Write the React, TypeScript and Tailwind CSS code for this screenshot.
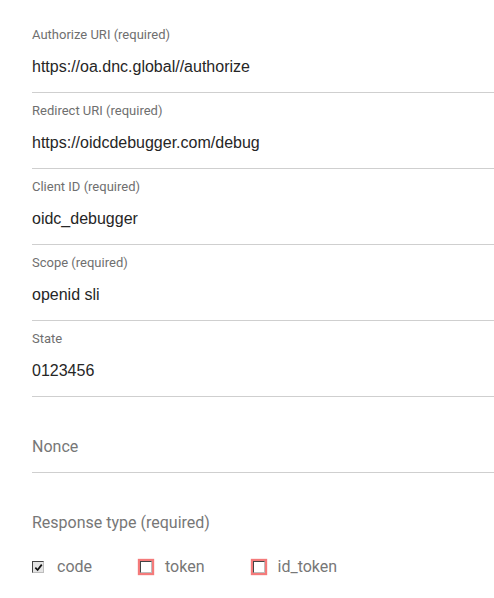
import React from 'react';

const fields = [
  { label: 'Authorize URI (required)', value: 'https://oa.dnc.global//authorize' },
  { label: 'Redirect URI (required)', value: 'https://oidcdebugger.com/debug' },
  { label: 'Client ID (required)', value: 'oidc_debugger' },
  { label: 'Scope (required)', value: 'openid sli' },
  { label: 'State', value: '0123456' },
];

const Check = ({ checked, invalid }: { checked?: boolean; invalid?: boolean }) => (
  <span
    className={
      'relative inline-flex h-3 w-3 items-center justify-center border border-t-[#444] border-l-[#444] border-r-[#bdbdbd] border-b-[#bdbdbd] ' +
      (checked ? 'bg-[#e4e4e4] ' : 'bg-white ') +
      (invalid ? 'shadow-[0_0_1px_2px_#f47a7a]' : '')
    }
  >
    {checked && (
      <svg viewBox="0 0 10 10" className="h-[9px] w-[9px]">
        <path d="M1.5 5.2 L4 7.8 L8.6 1.8" fill="none" stroke="#111" strokeWidth="1.9" />
      </svg>
    )}
  </span>
);

const App = () => {
  return (
    <div className="min-h-[598px] bg-white pl-8 pt-[17px]" style={{ fontFamily: 'Roboto, sans-serif' }}>
      {fields.map((f) => (
        <div key={f.label} className="h-[76px] border-b border-[#cfcfcf]">
          <div className="pt-[10px] text-[13px] leading-4 text-[#6f6f6f]">{f.label}</div>
          <div
            className="mt-[14px] text-[16px] leading-5 text-[#262626]"
            style={{ fontFamily: '"Liberation Sans", Arial, sans-serif' }}
          >
            {f.value}
          </div>
        </div>
      ))}
      <div className="h-[76px] border-b border-[#cfcfcf] pt-[40px]">
        <div className="text-[16px] leading-5 text-[#777]">Nonce</div>
      </div>
      <div className="pt-[40px] text-[16px] leading-5 text-[#777]">Response type (required)</div>
      <div className="mt-[24px] flex items-center text-[16px] leading-5 text-[#777]">
        <label className="mr-[48px] flex items-center gap-[13px]">
          <Check checked />
          <span>code</span>
        </label>
        <label className="mr-[48px] flex items-center gap-[13px]">
          <Check invalid />
          <span>token</span>
        </label>
        <label className="flex items-center gap-[13px]">
          <Check invalid />
          <span>id_token</span>
        </label>
      </div>
    </div>
  );
};

export default App;
